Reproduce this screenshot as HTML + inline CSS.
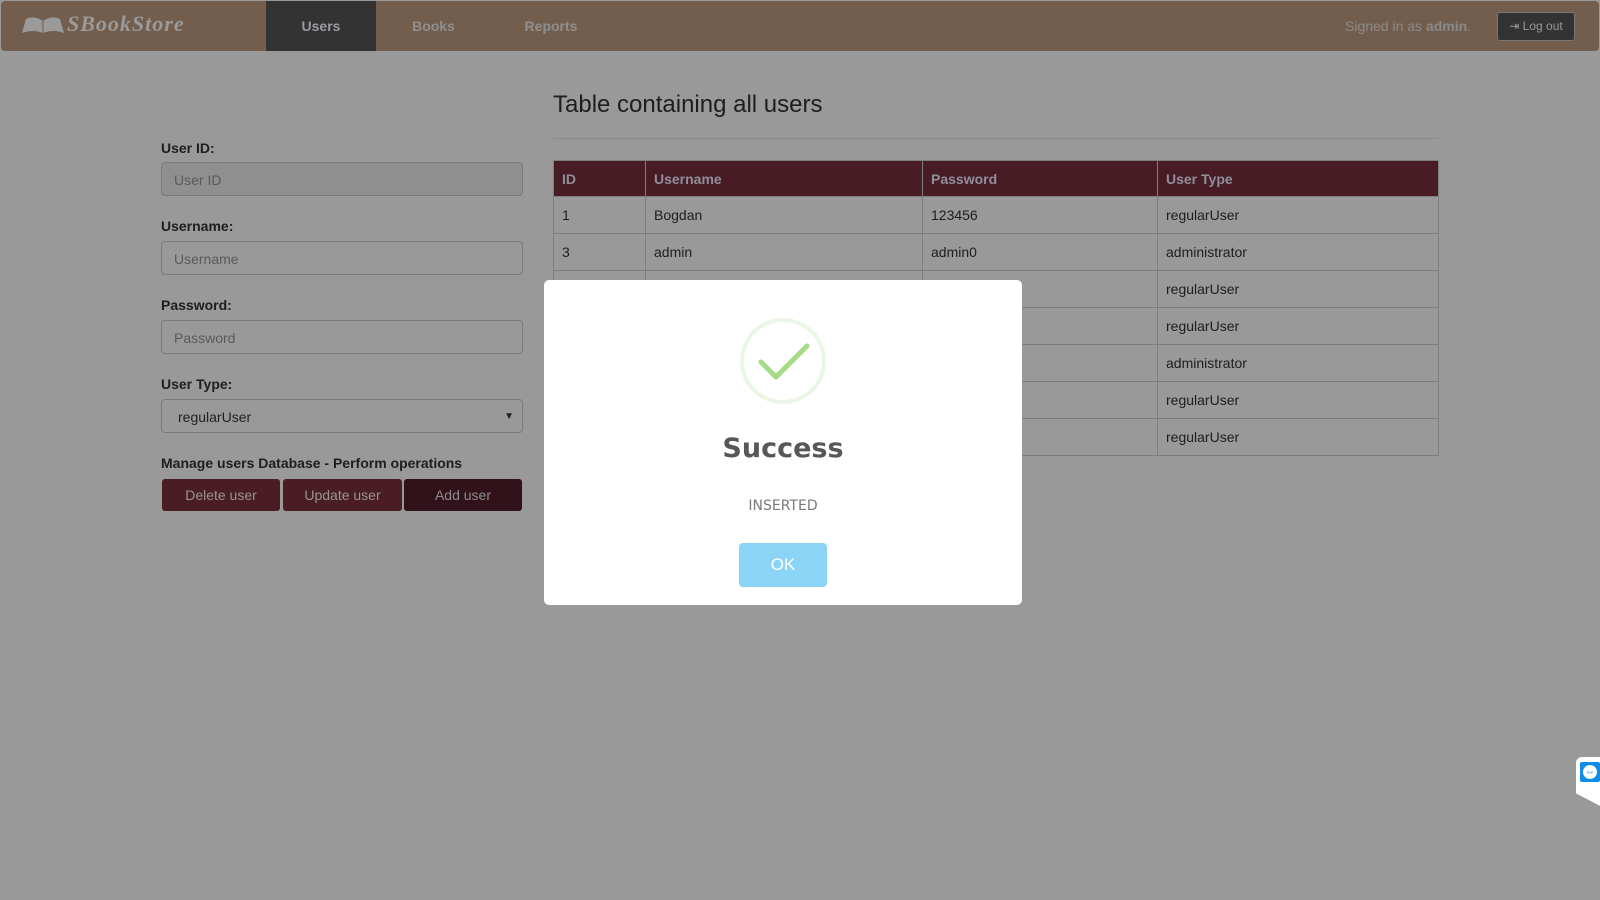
<!DOCTYPE html>
<html><head><style>
*{box-sizing:border-box;margin:0;padding:0}
body{width:1600px;height:900px;background:#999999;font-family:"Liberation Sans",Arial,sans-serif;position:relative;overflow:hidden;color:#141414}
.nav{position:absolute;left:1px;top:1px;width:1598px;height:50px;background:#735e4d;border-radius:4px}
.logo{position:absolute;left:66px;top:10px;font-family:"Liberation Serif",serif;font-style:italic;font-weight:bold;font-size:22px;color:#9a9a9a;letter-spacing:1px}
.tab{position:absolute;top:0;height:50px;line-height:50px;font-size:14px;font-weight:bold;color:#8f8f8f;text-align:center}
.signed{position:absolute;left:1344px;top:17px;font-size:14px;color:#8a8a8a}
.logout{position:absolute;left:1496px;top:11px;width:78px;height:29px;background:#333;border:1px solid #777;border-radius:3px;color:#999;font-size:12px;line-height:27px;text-align:center}
.lbl{position:absolute;left:161px;font-size:14px;font-weight:bold;color:#1e1e1e}
.inp{position:absolute;left:161px;width:362px;height:34px;border:1px solid #7a7a7a;border-radius:4px;background:#999;font-size:14px;color:#5a5a5a;padding:9px 12px}
.btn{position:absolute;top:479px;height:32px;background:#4a1c24;border-radius:3px;color:#959595;font-size:14px;text-align:center;line-height:32px}
h2{position:absolute;left:553px;top:91px;font-size:24px;font-weight:normal;color:#1e1e1e}
.hr{position:absolute;left:553px;top:138px;width:885px;height:1px;background:#8a8a8a}
table{position:absolute;left:553px;top:160px;width:886px;border-collapse:collapse;font-size:14px}
td,th{border:1px solid #7d7d7d;height:37px;padding:0 8px;text-align:left;color:#1e1e1e}
th{background:#481c25;color:#8f8f9a;height:36px}
.modal{position:absolute;left:544px;top:280px;width:478px;height:325px;background:#fff;border-radius:5px;text-align:center}
.ok{position:absolute;left:195px;top:263px;width:88px;height:44px;background:#8cd4f5;border-radius:4px;color:#fff;font-size:17px;line-height:44px}
</style></head><body>
<div class="nav">
<svg style="position:absolute;left:20px;top:14px" width="44" height="20" viewBox="0 0 44 20"><path d="M1 18 L5 4 Q13 0 22 6 Q31 0 39 4 L43 18 Q32 14 22 18 Q12 14 1 18Z" fill="#9a9a9a"/><path d="M22 6 V18" stroke="#735e4d" stroke-width="1"/></svg>
<div class="logo">SBookStore</div>
<div class="tab" style="left:265px;width:110px;background:#333;color:#9a9aa4">Users</div>
<div class="tab" style="left:395px;width:75px">Books</div>
<div class="tab" style="left:510px;width:80px">Reports</div>
<div class="signed">Signed in as <b>admin</b>.</div>
<div class="logout">⇥ Log out</div>
</div>
<div class="lbl" style="top:140px">User ID:</div>
<div class="inp" style="top:162px;background:#8f8f8f">User ID</div>
<div class="lbl" style="top:218px">Username:</div>
<div class="inp" style="top:241px">Username</div>
<div class="lbl" style="top:297px">Password:</div>
<div class="inp" style="top:320px">Password</div>
<div class="lbl" style="top:376px">User Type:</div>
<div class="inp" style="top:399px;padding-left:16px;color:#222">regularUser<span style="position:absolute;right:8px;font-size:10px;top:11px">▼</span></div>
<div class="lbl" style="top:455px">Manage users Database - Perform operations</div>
<div class="btn" style="left:162px;width:118px">Delete user</div>
<div class="btn" style="left:283px;width:119px">Update user</div>
<div class="btn" style="left:404px;width:118px;background:#31121a;color:#8c8c8c">Add user</div>
<h2>Table containing all users</h2>
<div class="hr"></div>
<table>
<tr><th style="width:92px">ID</th><th style="width:277px">Username</th><th style="width:235px">Password</th><th>User Type</th></tr>
<tr><td>1</td><td>Bogdan</td><td>123456</td><td>regularUser</td></tr>
<tr><td>3</td><td>admin</td><td>admin0</td><td>administrator</td></tr>
<tr><td></td><td></td><td></td><td>regularUser</td></tr>
<tr><td></td><td></td><td></td><td>regularUser</td></tr>
<tr><td></td><td></td><td></td><td>administrator</td></tr>
<tr><td></td><td></td><td></td><td>regularUser</td></tr>
<tr><td></td><td></td><td></td><td>regularUser</td></tr>
</table>
<div class="modal">
<svg style="position:absolute;left:193px;top:35px" width="92" height="92" viewBox="0 0 92 92"><circle cx="46" cy="46" r="41" fill="none" stroke="#eaf7e4" stroke-width="4"/><path d="M24 47 L39 62 L70 31" fill="none" stroke="#a5dc86" stroke-width="5" stroke-linecap="round" stroke-linejoin="round"/></svg>
<div style="position:absolute;left:0;width:100%;top:153px;font-family:'DejaVu Sans',sans-serif;font-size:27px;font-weight:bold;color:#575757">Success</div>
<div style="position:absolute;left:0;width:100%;top:218px;font-family:'DejaVu Sans',sans-serif;font-size:14px;color:#797979">INSERTED</div>
<div class="ok">OK</div>
</div>
<div style="position:absolute;left:1576px;top:757px;width:30px;height:52px;background:#fff;border-radius:6px 0 0 0;clip-path:polygon(0 0,100% 0,100% 100%,0 70%)"></div>
<div style="position:absolute;left:1580px;top:762px;width:20px;height:20px;background:#0e8ee9;border-radius:2px"><div style="margin:3px;width:14px;height:14px;border-radius:50%;background:#fff;color:#0e8ee9;font-size:10px;line-height:14px;text-align:center;font-weight:bold">↔</div></div>
</body></html>
